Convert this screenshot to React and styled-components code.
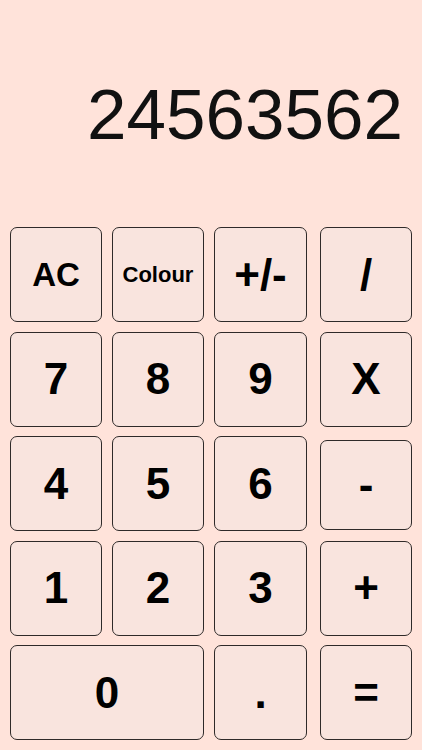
import React, { useState } from 'react';
import styled, { createGlobalStyle } from 'styled-components';

const GlobalStyle = createGlobalStyle`
    html, body {
        margin: 0;
        padding: 0;
        background: #ffe3da;
    }
    body {
        font-family: "Liberation Sans", Arial, Helvetica, sans-serif;
    }
`;

const Screen = styled.div`
    width: 422px;
    height: 750px;
    display: flex;
    flex-direction: column;
    background: #ffe3da;
    overflow: hidden;
`;

const Display = styled.div`
    height: 227px;
    box-sizing: border-box;
    padding: 79px 19px 0 0;
    display: flex;
    justify-content: flex-end;
    align-items: flex-start;
    font-size: 71px;
    line-height: 1;
    color: #111;
`;

const Keypad = styled.div`
    display: grid;
    grid-template-columns: 92px 92px 93px 95px;
    grid-auto-rows: 95px;
    column-gap: 10px;
    row-gap: 9.5px;
    padding: 0 10px;
`;

const Key = styled.button`
    display: flex;
    align-items: center;
    justify-content: center;
    box-sizing: border-box;
    width: ${p => (p.$op ? '92px' : '100%')};
    height: ${p => (p.$short ? '90px' : '100%')};
    justify-self: ${p => (p.$op ? 'end' : 'stretch')};
    align-self: ${p => (p.$short ? 'end' : 'stretch')};
    margin-bottom: ${p => (p.$short ? '1px' : '0')};
    grid-column: ${p => (p.$wide ? 'span 2' : 'auto')};
    padding: 0;
    border: 1px solid #2f2a29;
    border-radius: 7px;
    background: #f9e4de;
    color: #000;
    font-family: "Liberation Sans", Arial, Helvetica, sans-serif;
    font-weight: bold;
    font-size: ${p => p.$size || 44}px;
    line-height: 1;
    cursor: pointer;
    &:active {
        background: #f3d6cd;
    }
`;

const keys = [
    { label: 'AC', size: 33 },
    { label: 'Colour', size: 22 },
    { label: '+/-' },
    { label: '/', op: true },
    { label: '7' },
    { label: '8' },
    { label: '9' },
    { label: 'X', op: true },
    { label: '4' },
    { label: '5' },
    { label: '6' },
    { label: '-', op: true, short: true },
    { label: '1' },
    { label: '2' },
    { label: '3' },
    { label: '+', op: true },
    { label: '0', wide: true },
    { label: '.' },
    { label: '=', op: true },
];

function App() {
    const [value] = useState('24563562');

    return (
        <Screen>
            <GlobalStyle />
            <Display>{value}</Display>
            <Keypad>
                {keys.map(k => (
                    <Key
                        key={k.label}
                        $size={k.size}
                        $op={k.op}
                        $short={k.short}
                        $wide={k.wide}
                    >
                        {k.label}
                    </Key>
                ))}
            </Keypad>
        </Screen>
    );
}

export default App;
